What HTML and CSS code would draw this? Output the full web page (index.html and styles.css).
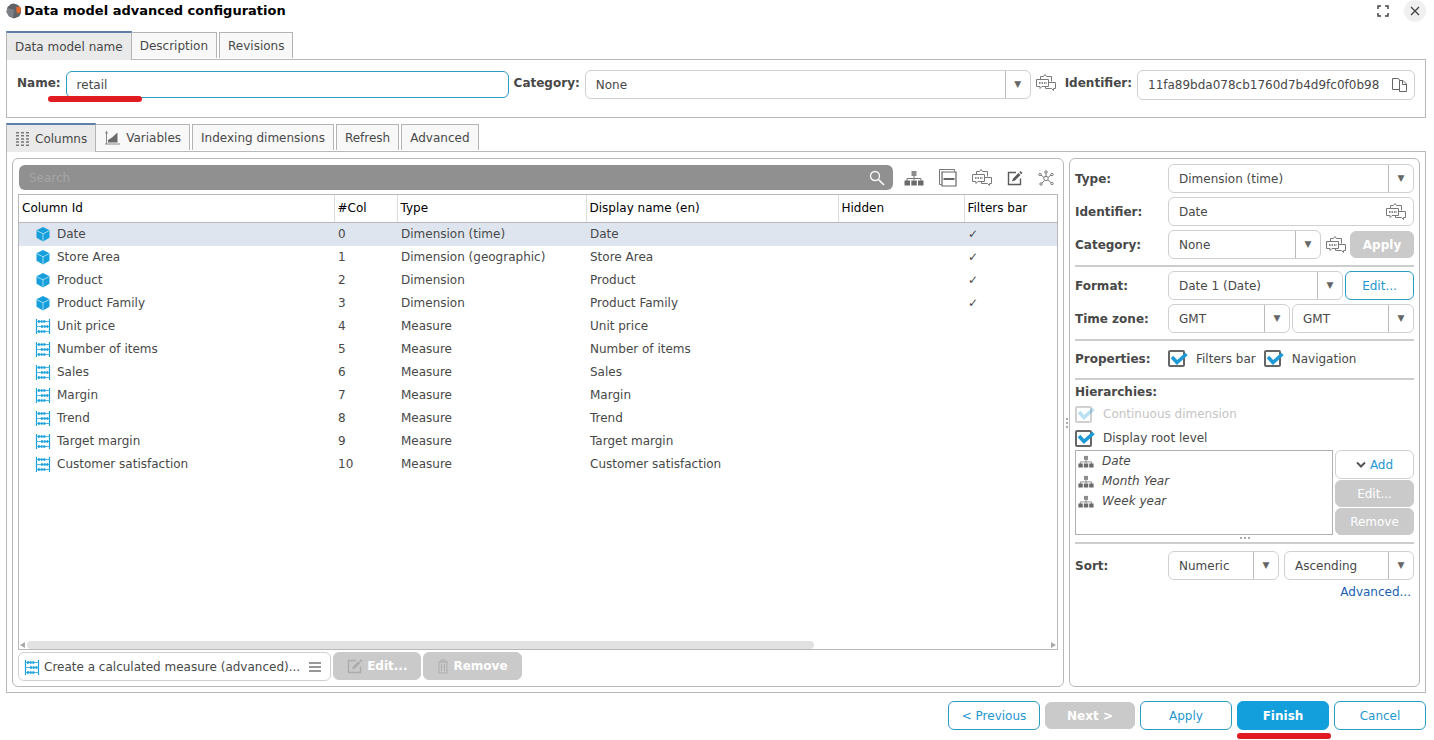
FILE: index.html
```
<!DOCTYPE html>
<html lang="en">
<head>
    <meta charset="UTF-8">
    <meta name="viewport" content="width=device-width, initial-scale=1.0">
    <title>Data model advanced configuration</title>
    <link rel="stylesheet" href="styles.css">
</head>
<body>
    <!-- Icon set -->
    <svg class="sprite" aria-hidden="true">
        <symbol id="cube" viewBox="0 0 16 16">
            <path d="M8 1l6.500 3.200v7.600L8 15.500l-6.500-3.700V4.200z" fill="#169fdb"/>
            <path d="M2 4.800l6 3 6-3M8 7.800V15" fill="none" stroke="#9ad9f3" stroke-width="1"/>
        </symbol>
        <symbol id="measure" viewBox="0 0 16 16">
            <path d="M1.500 1v15M14.500 1v15" stroke="#169fdb" stroke-width="1.200"/>
            <path d="M1.500 3.500h13M1.500 8.500h13M1.500 13.500h13" stroke="#4db5e3"/>
            <path d="M3 3.500h7.500M6 8.500h8M3 13.500h7.500" stroke="#169fdb" stroke-width="2.400" stroke-dasharray="1.900 .8"/>
        </symbol>
        <symbol id="tree" viewBox="0 0 20 16">
            <path d="M7.500 1h5v5h-5z" fill="#8c8c8c"/>
            <path d="M10 6v4M3 11V8.500h14V11" fill="none" stroke="#777"/>
            <path d="M.5 10.500h5.500v5H.5zM7.300 10.500h5.500v5H7.300zM14 10.500h5.500v5H14z" fill="#6a6a6a"/>
        </symbol>
        <symbol id="chat" viewBox="0 0 20 18">
            <g fill="none" stroke="#7a7a7a">
                <path d="M4.500 5.500v-3h3l1.500-2 1.500 2h5v5"/>
                <path d="M.5 5.500h12v7H6l-2 2v-2H.5z"/>
                <path d="M12.500 8.500h7v6h-2v2l-2-2h-6v-2"/>
            </g>
            <path d="M3 9h8" stroke="#666" stroke-width="1.500" stroke-dasharray="1.500 1"/>
        </symbol>
        <symbol id="collapse" viewBox="0 0 18 18">
            <path d="M2.500 15.500h-2V.5h15v2" fill="none" stroke="#777"/>
            <path d="M3 3h14v14H3z" fill="none" stroke="#666" stroke-width="1.200"/>
            <path d="M4.500 10h11" stroke="#666" stroke-width="2"/>
        </symbol>
        <symbol id="edit" viewBox="0 0 16 16">
            <path d="M9 2.500H1.500v12h12V8.500" fill="none" stroke="currentColor" stroke-width="1.400"/>
            <path d="M5 11.500l1-3L11.500 3 13.500 5 8 10.500zM12.300 2.200L13.500 1l2 2-1.200 1.200z" fill="currentColor"/>
        </symbol>
        <symbol id="network" viewBox="0 0 16 16">
            <path d="M8 6V3M10 7.500l3-2.500M10 10l3 2.500M6.500 10.500L4 13M6 7.500L3 5" stroke="#777"/>
            <g fill="#fff" stroke="#777">
                <circle cx="8" cy="8.500" r="2.200"/>
                <circle cx="8" cy="2" r="1.200"/>
                <circle cx="2" cy="4.500" r="1.200"/>
                <circle cx="14" cy="4.500" r="1.200"/>
                <circle cx="3" cy="14" r="1.200"/>
                <circle cx="14" cy="13.500" r="1.200"/>
            </g>
        </symbol>
        <symbol id="tick" viewBox="0 0 20 18">
            <path d="M4 7l5 5.500L18.500 4" fill="none" stroke="#1d9ad6" stroke-width="3.600"/>
        </symbol>
    </svg>

    <header class="title-bar">
        <svg class="logo" viewBox="0 0 16 16">
            <path d="M8 .5l4 1.500 3 3v5l-2 3.500L8 15.500 3 13.500.5 9l1-5L5 1z" fill="#606268"/>
            <path d="M1.500 5L8 7l-1 8-4-2L.5 9z" fill="#7e8087"/>
            <path d="M10 4.500L13 3.500l2 2-.5 4-3.500 1z" fill="#e2692c"/>
        </svg>
        <h1>Data model advanced configuration</h1>
        <button class="window-btn" aria-label="Full screen">
            <svg width="12" height="12" viewBox="0 0 12 12"><path d="M1 4V1h3M8 1h3v3M11 8v3H8M4 11H1V8" fill="none" stroke="#444" stroke-width="1.500"/></svg>
        </button>
        <button class="window-btn close" aria-label="Close">
            <svg width="10" height="10" viewBox="0 0 10 10"><path d="M1 1l8 8M9 1L1 9" stroke="#444" stroke-width="1.300"/></svg>
        </button>
    </header>

    <!-- Data model -->
    <nav class="tabs">
        <button class="tab active">Data model name</button>
        <button class="tab">Description</button>
        <button class="tab">Revisions</button>
    </nav>
    <section class="panel name-panel">
        <label for="name">Name:</label>
        <div class="name-box marked">
            <input class="field focused" type="text" id="name" value="retail">
        </div>
        <label for="model-category">Category:</label>
        <div class="select model-category">
            <select id="model-category"><option>None</option></select>
        </div>
        <button class="icon-btn" aria-label="Translate category"><svg class="chat"><use href="#chat"/></svg></button>
        <label for="model-id" class="id-label">Identifier:</label>
        <div class="field-box id-box">
            <input type="text" id="model-id" value="11fa89bda078cb1760d7b4d9fc0f0b98">
            <button class="icon-btn" aria-label="Copy">
                <svg width="15" height="14" viewBox="0 0 15 14"><path d="M7.500 11.500h-7V.5h5.500l3 2.500M9 13.500h5.500V6l-3.500-3.500H7.500v11zM10.500 3v3.500h4" fill="none" stroke="#666"/></svg>
            </button>
        </div>
    </section>

    <!-- Columns -->
    <nav class="tabs">
        <button class="tab active">
            <svg width="13" height="14" viewBox="0 0 13 14"><path d="M1.500 0v14M6.500 0v14M11.500 0v14" stroke="#777" stroke-width="3" stroke-dasharray="1.500 1.600"/></svg>
            Columns
        </button>
        <button class="tab">
            <svg width="15" height="14" viewBox="0 0 15 14"><path d="M1.500 0v13M0 13h15M0 2h3" fill="none" stroke="#888"/><path d="M3 11.500V9l4-2.500 5.500-5v10z" fill="#6a6a6a"/></svg>
            Variables
        </button>
        <button class="tab">Indexing dimensions</button>
        <button class="tab">Refresh</button>
        <button class="tab">Advanced</button>
    </nav>
    <main class="panel workspace">
        <section class="group columns">
            <div class="toolbar">
                <div class="search">
                    <input type="search" placeholder="Search" aria-label="Search">
                    <svg width="16" height="16" viewBox="0 0 16 16"><circle cx="6" cy="6" r="4.500" fill="none" stroke="#fff" stroke-width="1.300"/><path d="M9.500 9.500L15 15" stroke="#fff" stroke-width="1.500"/></svg>
                </div>
                <button class="icon-btn" aria-label="Hierarchies"><svg class="tree"><use href="#tree"/></svg></button>
                <button class="icon-btn" aria-label="Collapse"><svg class="collapse"><use href="#collapse"/></svg></button>
                <button class="icon-btn" aria-label="Translations"><svg class="chat"><use href="#chat"/></svg></button>
                <button class="icon-btn" aria-label="Edit"><svg class="small"><use href="#edit"/></svg></button>
                <button class="icon-btn" aria-label="Network"><svg class="small"><use href="#network"/></svg></button>
            </div>
            <div class="table-box">
                <table>
                    <colgroup>
                        <col class="col-id"><col class="col-num"><col class="col-type"><col class="col-name"><col class="col-hidden"><col>
                    </colgroup>
                    <thead>
                        <tr><th>Column Id</th><th>#Col</th><th>Type</th><th>Display name (en)</th><th>Hidden</th><th>Filters bar</th></tr>
                    </thead>
                    <tbody>
                        <tr class="selected"><td><svg class="row-icon"><use href="#cube"/></svg>Date</td><td>0</td><td>Dimension (time)</td><td>Date</td><td></td><td>✓</td></tr>
                        <tr><td><svg class="row-icon"><use href="#cube"/></svg>Store Area</td><td>1</td><td>Dimension (geographic)</td><td>Store Area</td><td></td><td>✓</td></tr>
                        <tr><td><svg class="row-icon"><use href="#cube"/></svg>Product</td><td>2</td><td>Dimension</td><td>Product</td><td></td><td>✓</td></tr>
                        <tr><td><svg class="row-icon"><use href="#cube"/></svg>Product Family</td><td>3</td><td>Dimension</td><td>Product Family</td><td></td><td>✓</td></tr>
                        <tr><td><svg class="row-icon"><use href="#measure"/></svg>Unit price</td><td>4</td><td>Measure</td><td>Unit price</td><td></td><td></td></tr>
                        <tr><td><svg class="row-icon"><use href="#measure"/></svg>Number of items</td><td>5</td><td>Measure</td><td>Number of items</td><td></td><td></td></tr>
                        <tr><td><svg class="row-icon"><use href="#measure"/></svg>Sales</td><td>6</td><td>Measure</td><td>Sales</td><td></td><td></td></tr>
                        <tr><td><svg class="row-icon"><use href="#measure"/></svg>Margin</td><td>7</td><td>Measure</td><td>Margin</td><td></td><td></td></tr>
                        <tr><td><svg class="row-icon"><use href="#measure"/></svg>Trend</td><td>8</td><td>Measure</td><td>Trend</td><td></td><td></td></tr>
                        <tr><td><svg class="row-icon"><use href="#measure"/></svg>Target margin</td><td>9</td><td>Measure</td><td>Target margin</td><td></td><td></td></tr>
                        <tr><td><svg class="row-icon"><use href="#measure"/></svg>Customer satisfaction</td><td>10</td><td>Measure</td><td>Customer satisfaction</td><td></td><td></td></tr>
                    </tbody>
                </table>
                <div class="scrollbar">
                    <span class="arrow-left"></span>
                    <span class="track"><span class="thumb"></span></span>
                    <span class="arrow-right"></span>
                </div>
            </div>
            <div class="actions">
                <button class="btn create">
                    <svg class="row-icon"><use href="#measure"/></svg>
                    Create a calculated measure (advanced)...
                    <svg width="12" height="10" viewBox="0 0 12 10"><path d="M0 1h12M0 5h12M0 9h12" stroke="#777" stroke-width="1.500"/></svg>
                </button>
                <button class="btn strong" disabled><svg class="small"><use href="#edit"/></svg>Edit...</button>
                <button class="btn strong" disabled>
                    <svg width="12" height="15" viewBox="0 0 12 15"><path d="M1 3h10M4 3V1h4v2M2 3v11h8V3M4.500 5v7M7.500 5v7" fill="none" stroke="currentColor"/></svg>
                    Remove
                </button>
            </div>
        </section>

        <div class="splitter"><span></span><span></span><span></span></div>

        <aside class="group details">
            <div class="row">
                <label for="type">Type:</label>
                <div class="select"><select id="type"><option>Dimension (time)</option></select></div>
            </div>
            <div class="row">
                <label for="identifier">Identifier:</label>
                <div class="field-box">
                    <input type="text" id="identifier" value="Date">
                    <button class="icon-btn" aria-label="Translate identifier"><svg class="chat"><use href="#chat"/></svg></button>
                </div>
            </div>
            <div class="row">
                <label for="category">Category:</label>
                <div class="select"><select id="category"><option>None</option></select></div>
                <button class="icon-btn category-chat" aria-label="Translate category"><svg class="chat"><use href="#chat"/></svg></button>
                <button class="btn strong apply" disabled>Apply</button>
            </div>
            <hr>
            <div class="row">
                <label for="format">Format:</label>
                <div class="select"><select id="format"><option>Date 1 (Date)</option></select></div>
                <button class="btn blue edit-format">Edit...</button>
            </div>
            <div class="row">
                <label for="timezone">Time zone:</label>
                <div class="select"><select id="timezone"><option>GMT</option></select></div>
                <div class="select"><select aria-label="Display time zone"><option>GMT</option></select></div>
            </div>
            <hr>
            <div class="row properties">
                <span class="label">Properties:</span>
                <label class="check"><input type="checkbox" checked><svg><use href="#tick"/></svg>Filters bar</label>
                <label class="check"><input type="checkbox" checked><svg><use href="#tick"/></svg>Navigation</label>
            </div>
            <hr>
            <h2>Hierarchies:</h2>
            <label class="check off"><input type="checkbox" checked disabled><svg><use href="#tick"/></svg>Continuous dimension</label>
            <label class="check"><input type="checkbox" checked><svg><use href="#tick"/></svg>Display root level</label>
            <div class="hierarchies">
                <ul>
                    <li><svg><use href="#tree"/></svg>Date</li>
                    <li><svg><use href="#tree"/></svg>Month Year</li>
                    <li><svg><use href="#tree"/></svg>Week year</li>
                </ul>
                <div class="side-buttons">
                    <button class="btn add">
                        <svg width="10" height="7" viewBox="0 0 10 7"><path d="M1 1.500l4 4 4-4" fill="none" stroke="#555" stroke-width="2"/></svg>
                        Add
                    </button>
                    <button class="btn" disabled>Edit...</button>
                    <button class="btn" disabled>Remove</button>
                </div>
            </div>
            <div class="grip"><span></span><span></span><span></span></div>
            <hr class="tight">
            <div class="row sort">
                <label for="sort">Sort:</label>
                <div class="select sort-by"><select id="sort"><option>Numeric</option></select></div>
                <div class="select"><select aria-label="Sort order"><option>Ascending</option></select></div>
            </div>
            <a class="advanced" href="#">Advanced...</a>
        </aside>
    </main>

    <footer>
        <button class="btn blue">&lt; Previous</button>
        <button class="btn strong next" disabled>Next &gt;</button>
        <button class="btn blue">Apply</button>
        <div class="marked finish-box"><button class="btn primary">Finish</button></div>
        <button class="btn blue">Cancel</button>
    </footer>
</body>
</html>
```
FILE: styles.css
```
* {
    margin: 0;
    padding: 0;
    box-sizing: border-box;
}
body {
    min-height: 100vh;
    padding: 0 8px 10px 6px;
    display: flex;
    flex-direction: column;
    font-family: "DejaVu Sans", Verdana, sans-serif;
    font-size: 12px;
    line-height: 16px;
    color: #484848;
    background: #fff;
}
button, input, select {
    font: inherit;
    color: inherit;
    background: none;
    border: none;
    outline: none;
}
button {
    cursor: pointer;
}
svg {
    display: block;
    flex: none;
}
.sprite {
    position: absolute;
    width: 0;
    height: 0;
}
label, .label, h2 {
    font-size: 12px;
    font-weight: bold;
}

/* Title bar */
.title-bar {
    height: 31px;
    padding-bottom: 9px;
    display: flex;
    align-items: center;
    gap: 2px;
}
.title-bar h1 {
    flex: 1;
    font-size: 13px;
    color: #000;
}
.logo {
    width: 16px;
    height: 16px;
}
.window-btn {
    width: 22px;
    height: 22px;
    display: flex;
    align-items: center;
    justify-content: center;
}
.close {
    margin-left: 8px;
    border-radius: 50%;
    background: #f0f0f0;
}

/* Tabs */
.tabs {
    height: 28px;
    display: flex;
    align-items: flex-start;
    gap: 2px;
}
.tab {
    height: 26px;
    margin-top: 1px;
    padding: 0 8px;
    display: flex;
    align-items: center;
    gap: 6px;
    border: 1px solid #b4b4b4;
    border-bottom: none;
    background: #f8f8f8;
}
.tab svg {
    margin-left: 1px;
}
.tab.active {
    height: 29px;
    margin: 0 -3px 0 0;
    border-top: 2px solid #5f7fab;
    background: #eaeaea;
    position: relative;
}
.panel {
    border: 1px solid #b8b8b8;
}

/* Fields */
.field, .field-box, .select {
    height: 29px;
    border: 1px solid #d0d0d0;
    border-radius: 6px;
    background: #fff;
}
.field {
    width: 100%;
    padding: 0 10px;
}
.field.focused {
    height: 27px;
    border-color: #2a9cc4;
}
.field-box {
    flex: 1;
    display: flex;
    align-items: center;
    padding: 0 7px 0 10px;
}
.field-box input {
    flex: 1;
    min-width: 0;
}
.select {
    flex: 1;
    display: grid;
}
.select select {
    grid-area: 1 / 1;
    width: 100%;
    padding: 0 26px 0 10px;
    appearance: none;
}
.select::after {
    content: "▼";
    grid-area: 1 / 1;
    justify-self: end;
    width: 24px;
    border-left: 1px solid #bbb;
    font-size: 9px;
    line-height: 27px;
    text-align: center;
    color: #666;
    pointer-events: none;
}
.chat {
    width: 20px;
    height: 18px;
}
.small {
    width: 16px;
    height: 16px;
}

/* Red pen marks */
.marked {
    position: relative;
}
.marked::after {
    content: "";
    position: absolute;
    width: 94px;
    height: 6px;
    border-radius: 3px;
    background: #e01b22;
}
.name-box::after {
    left: -18px;
    top: 26px;
}
.finish-box::after {
    left: 0;
    top: 32px;
}

/* Name panel */
.name-panel {
    height: 59px;
    margin-bottom: 5px;
    padding: 10px;
    display: flex;
    align-items: flex-start;
    gap: 5px;
}
.name-panel label {
    line-height: 27px;
}
.name-box {
    flex: 0 1 443px;
    padding-top: 1px;
}
.model-category {
    flex: 1;
}
.name-panel .icon-btn {
    padding-top: 4px;
}
.id-label {
    margin-left: 4px;
}
.id-box {
    flex: 0 0 278px;
    height: 30px;
}
.id-box .icon-btn {
    padding: 0;
}

/* Workspace */
.workspace {
    flex: 1;
    padding: 6px 5px 5px;
    display: flex;
}
.group {
    border: 1px solid #b8b8b8;
    border-radius: 6px;
    padding: 5px;
}
.columns {
    flex: 1;
    min-width: 0;
    display: flex;
    flex-direction: column;
}
.toolbar {
    display: flex;
    align-items: center;
    gap: 14px;
    padding: 1px 5px 4px 1px;
}
.search {
    flex: 1;
    height: 25px;
    margin-right: -3px;
    padding: 0 8px 0 10px;
    display: flex;
    align-items: center;
    border-radius: 6px;
    background: #909090;
}
.search input {
    flex: 1;
    color: #fff;
}
.search input::placeholder {
    color: #a6a6a6;
}
.tree {
    width: 20px;
    height: 16px;
}
.collapse {
    width: 18px;
    height: 18px;
}
.toolbar .icon-btn {
    color: #5a5a5a;
}
.toolbar .icon-btn:nth-child(n+3) {
    margin-left: 1px;
}
.toolbar .icon-btn:last-child {
    margin-right: -1px;
}
.table-box {
    flex: 1;
    border: 1px solid #b8b8b8;
    display: flex;
    flex-direction: column;
    justify-content: space-between;
}
table {
    width: 100%;
    table-layout: fixed;
    border-collapse: collapse;
}
.col-id { width: 315px; }
.col-num { width: 63px; }
.col-type { width: 189px; }
.col-name { width: 252px; }
.col-hidden { width: 126px; }
th {
    height: 27px;
    padding: 0 3px;
    border-bottom: 1px solid #b8b8b8;
    font-weight: normal;
    text-align: left;
    color: #000;
}
th + th {
    border-left: 1px solid #ddd;
}
td {
    height: 23px;
    padding: 0 4px;
}
td:first-child {
    display: flex;
    align-items: center;
    gap: 6px;
    padding-left: 16px;
}
.selected {
    background: #dfe5ee;
}
.row-icon {
    width: 16px;
    height: 16px;
}
.scrollbar {
    display: flex;
    align-items: center;
    justify-content: space-between;
    gap: 2px;
    padding: 0 1px;
}
.track {
    flex: 1;
}
.thumb {
    display: block;
    width: 77%;
    height: 8px;
    border-radius: 4px;
    background: #e2e2e2;
}
.arrow-left, .arrow-right {
    border: 3px solid transparent;
}
.arrow-left {
    border-left: none;
    border-right: 5px solid #aaa;
}
.arrow-right {
    border-right: none;
    border-left: 5px solid #aaa;
}
.actions {
    display: flex;
    gap: 2px;
    padding-top: 2px;
}

/* Buttons */
.btn {
    height: 29px;
    padding: 0 12px;
    display: flex;
    align-items: center;
    justify-content: center;
    gap: 4px;
    border: 1px solid #d0d0d0;
    border-radius: 6px;
    background: #fff;
}
.btn:disabled {
    height: 27px;
    border-color: #cacaca;
    background: #cacaca;
    color: #fff;
}
.actions .btn:disabled {
    height: 28px;
    padding: 0 13px;
}
.btn:disabled svg {
    color: #adadad;
}
.strong:disabled, .primary {
    font-weight: bold;
}
.blue {
    border-color: #2a9cc4;
    color: #1f97d0;
}
.primary {
    border-color: #129fdc;
    background: #129fdc;
    color: #fff;
}
.create {
    padding: 0 8px 0 5px;
}
.create svg:last-child {
    margin: 0 1px 0 5px;
}

.splitter {
    width: 5px;
    display: flex;
    flex-direction: column;
    align-items: center;
    justify-content: center;
    gap: 2px;
}
.splitter span, .grip span {
    width: 2px;
    height: 2px;
    background: #aaa;
}

/* Column details */
.details {
    flex: 0 0 351px;
}
.row {
    display: flex;
    align-items: center;
    gap: 2px;
    margin-bottom: 4px;
}
.row > label:first-child, .label {
    flex: 0 0 91px;
}
.category-chat {
    margin: 0 2px 0 3px;
}
.apply {
    width: 64px;
}
.edit-format {
    width: 69px;
}
hr {
    height: 2px;
    margin: 6px 0 4px;
    border: none;
    background: #cdcdcd;
}
.properties {
    height: 27px;
    gap: 8px;
}
.properties .label {
    flex-basis: 85px;
}
.check {
    height: 24px;
    display: grid;
    grid-template-columns: 20px auto;
    column-gap: 8px;
    align-items: center;
    justify-content: start;
    font-weight: normal;
}
.check input {
    grid-area: 1 / 1;
    width: 17px;
    height: 17px;
    appearance: none;
    border: 2px solid #666;
    border-radius: 2px;
}
.check svg {
    grid-area: 1 / 1;
    width: 20px;
    height: 18px;
    pointer-events: none;
}
.check input:not(:checked) + svg {
    visibility: hidden;
}
.off {
    color: #c4c4c4;
}
.off input {
    border-color: #d0d0d0;
}
.off svg {
    opacity: 0.3;
}
h2 {
    padding-bottom: 2px;
}
.hierarchies {
    display: flex;
    gap: 2px;
}
ul {
    flex: 1;
    border: 1px solid #b0b0b0;
    list-style: none;
    font-style: italic;
}
li {
    height: 20px;
    display: flex;
    align-items: center;
    gap: 8px;
    padding-left: 2px;
}
li svg {
    width: 16px;
    height: 13px;
}
.side-buttons {
    width: 79px;
    display: flex;
    flex-direction: column;
    gap: 1px;
}
.add {
    color: #1f97d0;
}
.grip {
    height: 6px;
    display: flex;
    align-items: center;
    justify-content: center;
    gap: 2px;
}
.tight {
    margin: 1px 0 7px;
}
.sort {
    gap: 5px;
}
.row.sort > label {
    flex-basis: 88px;
}
.sort-by {
    flex: 0 0 111px;
}
.advanced {
    display: block;
    padding-right: 3px;
    text-align: right;
    text-decoration: none;
    color: #1a5fb4;
}

/* Footer */
footer {
    display: flex;
    justify-content: flex-end;
    align-items: center;
    gap: 5px;
    padding-top: 8px;
}
footer .btn {
    width: 92px;
}
footer .next {
    width: 90px;
}
```
